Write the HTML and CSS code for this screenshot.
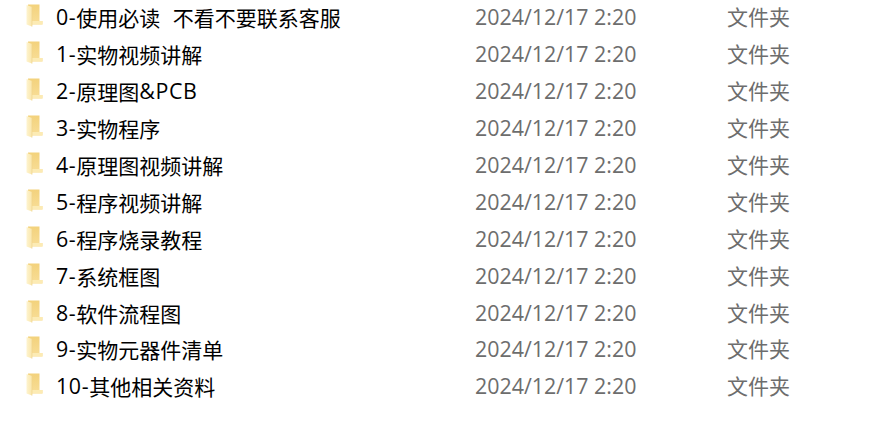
FILE: index.html
```html
<!DOCTYPE html>
<html lang="zh-CN">
<head>
    <meta charset="UTF-8">
    <title>文件夹</title>
    <link rel="stylesheet" href="styles.css">
</head>
<body>
    <svg class="icon-defs" width="0" height="0" aria-hidden="true">
        <defs>
            <linearGradient id="folder-back" x1="0" y1="0" x2="0" y2="1">
                <stop offset="0" stop-color="#f3d27c"/>
                <stop offset="1" stop-color="#f8de98"/>
            </linearGradient>
            <linearGradient id="folder-front" x1="0" y1="0" x2="1" y2="0">
                <stop offset="0" stop-color="#fef4cf"/>
                <stop offset="1" stop-color="#fae6aa"/>
            </linearGradient>
            <symbol id="folder" viewBox="0 0 17 23">
                <path d="M2 0.5H13.5V17H16.5V20.5H2Z" fill="url(#folder-back)"/>
                <path d="M6 17H16.5V20.5H6Z" fill="#fcebb4"/>
                <path d="M0.5 1L6 3V22.5L0.5 20.5Z" fill="url(#folder-front)"/>
                <path d="M6 3V22.5" stroke="#efd48c" stroke-width="0.7" fill="none"/>
            </symbol>
        </defs>
    </svg>

    <ul class="file-list">
        <li class="file-row"><span class="file-name"><svg class="folder-icon"><use href="#folder"/></svg><span class="latin">0-</span>使用必读<span class="latin">&nbsp;&nbsp;</span>不看不要联系客服</span><span class="file-date">2024/12/17 2:20</span><span class="file-type">文件夹</span></li>
        <li class="file-row"><span class="file-name"><svg class="folder-icon"><use href="#folder"/></svg><span class="latin">1-</span>实物视频讲解</span><span class="file-date">2024/12/17 2:20</span><span class="file-type">文件夹</span></li>
        <li class="file-row"><span class="file-name"><svg class="folder-icon"><use href="#folder"/></svg><span class="latin">2-</span>原理图<span class="latin">&amp;PCB</span></span><span class="file-date">2024/12/17 2:20</span><span class="file-type">文件夹</span></li>
        <li class="file-row"><span class="file-name"><svg class="folder-icon"><use href="#folder"/></svg><span class="latin">3-</span>实物程序</span><span class="file-date">2024/12/17 2:20</span><span class="file-type">文件夹</span></li>
        <li class="file-row"><span class="file-name"><svg class="folder-icon"><use href="#folder"/></svg><span class="latin">4-</span>原理图视频讲解</span><span class="file-date">2024/12/17 2:20</span><span class="file-type">文件夹</span></li>
        <li class="file-row"><span class="file-name"><svg class="folder-icon"><use href="#folder"/></svg><span class="latin">5-</span>程序视频讲解</span><span class="file-date">2024/12/17 2:20</span><span class="file-type">文件夹</span></li>
        <li class="file-row"><span class="file-name"><svg class="folder-icon"><use href="#folder"/></svg><span class="latin">6-</span>程序烧录教程</span><span class="file-date">2024/12/17 2:20</span><span class="file-type">文件夹</span></li>
        <li class="file-row"><span class="file-name"><svg class="folder-icon"><use href="#folder"/></svg><span class="latin">7-</span>系统框图</span><span class="file-date">2024/12/17 2:20</span><span class="file-type">文件夹</span></li>
        <li class="file-row"><span class="file-name"><svg class="folder-icon"><use href="#folder"/></svg><span class="latin">8-</span>软件流程图</span><span class="file-date">2024/12/17 2:20</span><span class="file-type">文件夹</span></li>
        <li class="file-row"><span class="file-name"><svg class="folder-icon"><use href="#folder"/></svg><span class="latin">9-</span>实物元器件清单</span><span class="file-date">2024/12/17 2:20</span><span class="file-type">文件夹</span></li>
        <li class="file-row"><span class="file-name"><svg class="folder-icon"><use href="#folder"/></svg><span class="latin">10-</span>其他相关资料</span><span class="file-date">2024/12/17 2:20</span><span class="file-type">文件夹</span></li>
    </ul>
</body>
</html>
```

FILE: styles.css
```css
body {
    margin: 0;
    background: #fff;
    font-family: "Noto Sans CJK SC", "Open Sans", sans-serif;
    font-size: 21px;
    line-height: 30px;
    overflow: hidden;
}

.icon-defs {
    display: block;
}

.file-list {
    list-style: none;
    margin: -1px 0 0;
    padding: 0 0 0 26px;
}

.file-row {
    display: grid;
    grid-template-columns: 449px 252px 1fr;
    align-items: center;
    height: 36.9px;
}

.file-name {
    display: flex;
    align-items: center;
    color: #000;
    white-space: pre;
}

.latin,
.file-date {
    font-family: "Open Sans", sans-serif;
    font-size: 21.4px;
}

.latin {
    letter-spacing: 0.6px;
}

.folder-icon {
    width: 17px;
    height: 23px;
    margin: 0 13px 3px 0;
    flex: none;
}

.file-date,
.file-type {
    color: #6d6d6d;
}

.file-type {
    padding-bottom: 2px;
}
```
